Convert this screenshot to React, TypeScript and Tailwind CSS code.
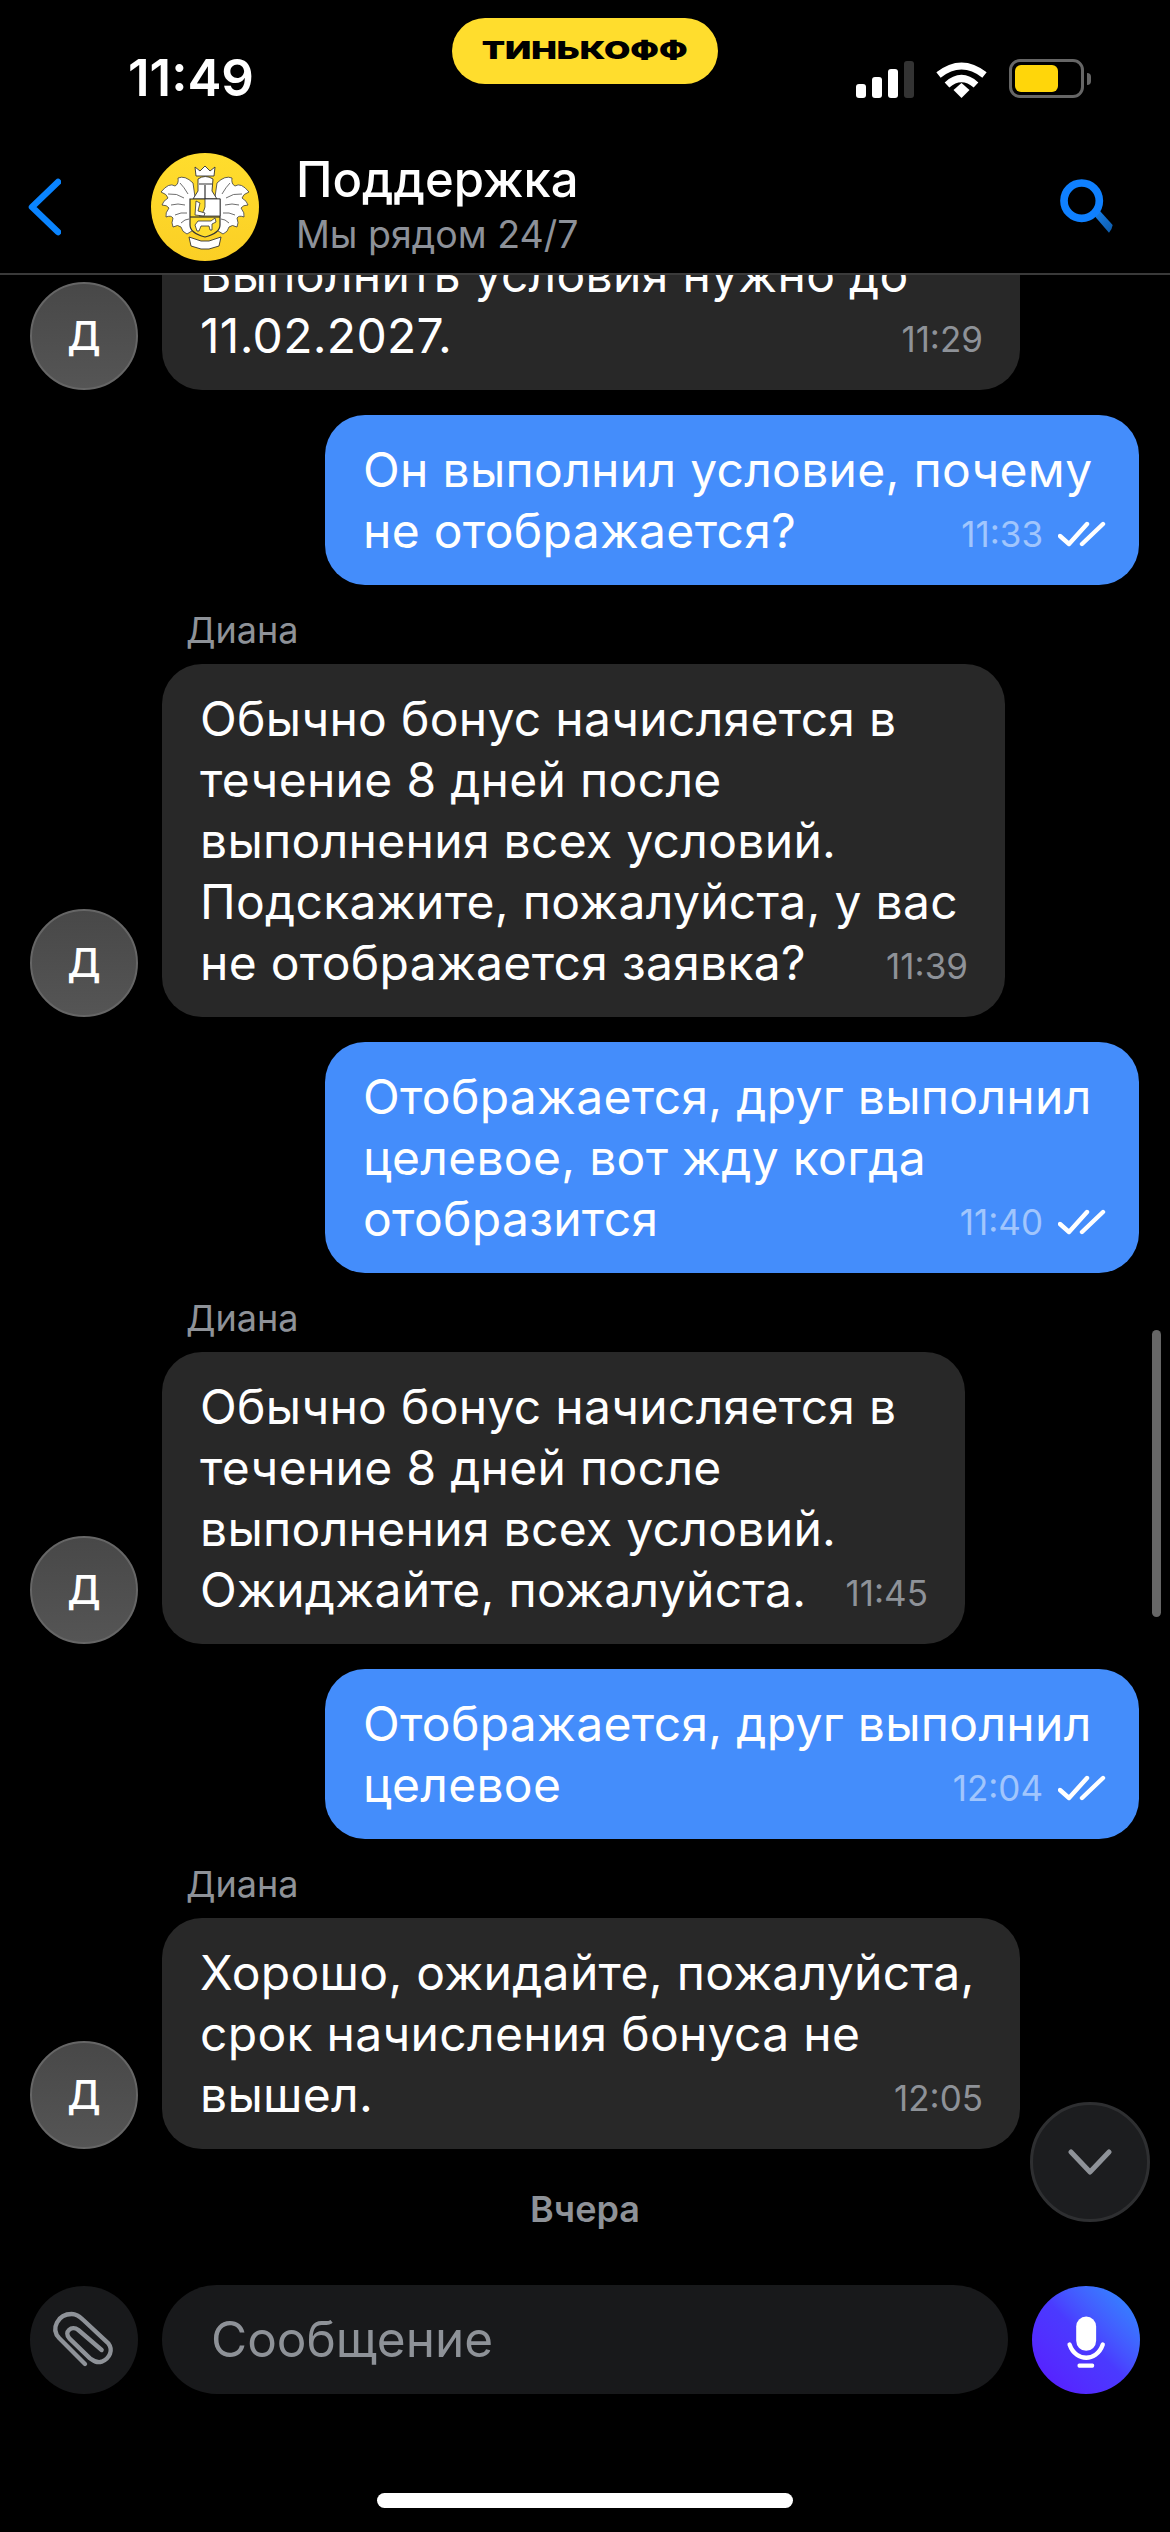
const sans = "font-['Inter','Liberation_Sans',sans-serif]";

type Msg = {
  out: boolean;
  name?: boolean;
  width: string;
  lines: string[];
  time: string;
};

const messages: Msg[] = [
  { out: false, width: "w-[858px]", lines: ["Выполнить условия нужно до", "11.02.2027."], time: "11:29" },
  { out: true, width: "w-[814px]", lines: ["Он выполнил условие, почему", "не отображается?"], time: "11:33" },
  {
    out: false,
    name: true,
    width: "w-[843px]",
    lines: ["Обычно бонус начисляется в", "течение 8 дней после", "выполнения всех условий.", "Подскажите, пожалуйста, у вас", "не отображается заявка?"],
    time: "11:39",
  },
  { out: true, width: "w-[814px]", lines: ["Отображается, друг выполнил", "целевое, вот жду когда", "отобразится"], time: "11:40" },
  {
    out: false,
    name: true,
    width: "w-[803px]",
    lines: ["Обычно бонус начисляется в", "течение 8 дней после", "выполнения всех условий.", "Ожиджайте, пожалуйста."],
    time: "11:45",
  },
  { out: true, width: "w-[814px]", lines: ["Отображается, друг выполнил", "целевое"], time: "12:04" },
  {
    out: false,
    name: true,
    width: "w-[858px]",
    lines: ["Хорошо, ожидайте, пожалуйста,", "срок начисления бонуса не", "вышел."],
    time: "12:05",
  },
];

function Crest() {
  return (
    <svg viewBox="0 0 108 108" className="w-[108px] h-[108px]">
      <defs>
        <linearGradient id="crestBg" x1="0" y1="0" x2="0" y2="1">
          <stop offset="0" stopColor="#ffdd2d" />
          <stop offset="1" stopColor="#fbcf25" />
        </linearGradient>
      </defs>
      <circle cx="54" cy="54" r="54" fill="url(#crestBg)" />
      <g fill="#fff" stroke="#3a3a3a" strokeWidth="0.8" strokeLinejoin="round">
        <path d="M42 30 Q34 22 27 25 Q28 31 24 33 Q18 29 10 39 Q16 41 17 45 Q12 48 11 52 Q16 52 18 55 Q14 60 15 64 Q20 62 22 65 Q20 70 22 74 Q27 71 30 74 Q31 79 36 81 L44 76 L44 44Z" />
        <path d="M66 30 Q74 22 81 25 Q80 31 84 33 Q90 29 98 39 Q92 41 91 45 Q96 48 97 52 Q92 52 90 55 Q94 60 93 64 Q88 62 86 65 Q88 70 86 74 Q81 71 78 74 Q77 79 72 81 L64 76 L64 44Z" />
      </g>
      <g fill="none" stroke="#4a4a4a" strokeWidth="0.8">
        <path d="M17 41 Q26 40 33 45 M20 52 Q27 50 34 52 M24 62 Q30 59 36 60 M30 70 Q34 66 38 66 M29 30 Q33 34 37 41" />
        <path d="M91 41 Q82 40 75 45 M88 52 Q81 50 74 52 M84 62 Q78 59 72 60 M78 70 Q74 66 70 66 M79 30 Q75 34 71 41" />
      </g>
      <path d="M45 23 L44 14 L49 18 L54 13 L59 18 L64 14 L63 23Z" fill="#fff" stroke="#333" strokeWidth="0.9" />
      <path d="M47 26 Q54 21 62 26 L61 38 L66 46 L42 46 L47 38Z" fill="#fff" stroke="#333" strokeWidth="0.9" />
      <path d="M48 31 H61 M54 32 V46" stroke="#333" strokeWidth="1.2" />
      <path d="M39 46 H69 V72 Q69 80 54 84 Q39 80 39 72Z" fill="#ffdd2d" stroke="#333" strokeWidth="1.2" />
      <path d="M39 64 H69" stroke="#333" strokeWidth="1.2" />
      <path d="M54 46 H69 V63 H48 Q54 58 54 54Z" fill="#fff" stroke="#333" strokeWidth="0.8" />
      <path d="M45 48 L49 50 L47 58 L54 60 L53 63 L44 62Z" fill="#fff" stroke="#333" strokeWidth="0.8" />
      <path d="M44 72 L47 68 L60 68 L64 65 L65 69 L61 71 L61 77 L59 77 L58 73 L50 73 L48 78 L46 78Z" fill="#fff" stroke="#333" strokeWidth="0.8" />
      <path d="M38 84 L50 88 H58 L70 84 L68 93 L58 96 H50 L40 93Z" fill="#fff" stroke="#333" strokeWidth="0.9" />
    </svg>
  );
}

function Checks() {
  return (
    <svg viewBox="0 0 48 26" className="w-[48px] h-[26px] ml-[15px]" fill="none" stroke="#fff" strokeWidth="4.4" strokeLinecap="round" strokeLinejoin="round">
      <path d="M2 15 L11 23 L29 3" />
      <path d="M24 23 L45 3" />
    </svg>
  );
}

function Avatar() {
  return (
    <div className="w-[108px] h-[108px] shrink-0 rounded-full bg-gradient-to-b from-[#484848] to-[#555555] border-[2px] border-[#666666] flex items-center justify-center text-white text-[40px] font-medium">
      Д
    </div>
  );
}

function Bubble({ m }: { m: Msg }) {
  const last = m.lines[m.lines.length - 1];
  return (
    <div className={`${m.width} rounded-[40px] px-[38px] py-[24px] text-[48px] tracking-[0.3px] leading-[61px] text-white ${m.out ? "bg-[#448dfb]" : "bg-[#282828]"}`}>
      {m.lines.slice(0, -1).map((l) => (
        <div key={l} className="whitespace-nowrap">{l}</div>
      ))}
      <div className="flex items-center justify-between whitespace-nowrap">
        <span>{last}</span>
        <span className={`flex items-center text-[35px] tracking-normal leading-[32px] mt-[6px] ${m.out ? "text-white/50 -mr-[5px]" : "text-[#8e9298] -mr-[1px]"}`}>
          {m.time}
          {m.out && <Checks />}
        </span>
      </div>
    </div>
  );
}

export default function App() {
  return (
    <div className={`relative w-[1170px] h-[2532px] bg-black flex flex-col overflow-hidden ${sans}`}>
      <div className="h-[140px] shrink-0 flex items-start">
        <div className="w-[452px] pl-[128px] pt-[52px] text-white text-[51px] leading-[52px] font-semibold">11:49</div>
        <div className="mt-[18px] w-[266px] h-[66px] rounded-full bg-[#ffdd2d] flex items-center justify-center text-black text-[25px] font-black">
          <span className="inline-block scale-x-[1.36]">ТИНЬКОФФ</span>
        </div>
        <div className="ml-[138px] mt-[59px] flex items-end">
          <div className="flex items-end gap-[6px] h-[37px]">
            <div className="w-[10px] h-[14px] rounded-[3px] bg-white" />
            <div className="w-[10px] h-[21px] rounded-[3px] bg-white" />
            <div className="w-[10px] h-[29px] rounded-[3px] bg-white" />
            <div className="w-[10px] h-[37px] rounded-[3px] bg-[#333333]" />
          </div>
          <svg viewBox="0 0 51 37" className="w-[51px] h-[37px] ml-[22px]" fill="none" stroke="#fff" strokeWidth="7">
            <path d="M2.5 14 Q25.5 -4 48.5 14" />
            <path d="M11 24 Q25.5 11 40 24" />
            <path d="M17.5 29 L25.5 22 L33.5 29 L25.5 37Z" fill="#fff" stroke="none" />
          </svg>
          <div className="ml-[22px] w-[75px] h-[39px] rounded-[11px] border-[3px] border-[#666666] p-[3px]">
            <div className="w-[43px] h-full rounded-[6px] bg-[#ffd60a]" />
          </div>
          <div className="w-[4px] h-[12px] ml-[3px] mb-[13px] rounded-r-full bg-[#666666]" />
        </div>
      </div>

      <div className="h-[135px] shrink-0 border-b-[2px] border-[#3a3a3a] flex items-start pt-[13px]">
        <svg viewBox="0 0 33 58" className="w-[33px] h-[58px] ml-[28px] mt-[25px]" fill="none" stroke="#0a84ff" strokeWidth="6.5" strokeLinecap="round" strokeLinejoin="round">
          <path d="M30 4 L4 29 L30 54" />
        </svg>
        <div className="ml-[90px]">
          <Crest />
        </div>
        <div className="ml-[37px] flex-1">
          <div className="text-white text-[49px] leading-[54px] font-medium">Поддержка</div>
          <div className="text-[#8d9199] text-[37.5px] leading-[44px] mt-[6px]">Мы рядом 24/7</div>
        </div>
        <svg viewBox="0 0 270 240" className="w-[90px] h-[80px] mr-[40px] mt-[12px]">
          <defs>
            <linearGradient id="handle" x1="0" y1="0" x2="1" y2="1">
              <stop offset="0" stopColor="#1a80ea" />
              <stop offset="1" stopColor="#0c5aa8" />
            </linearGradient>
          </defs>
          <path d="M163 152 L180 138 L218 180 Q216 194 207 203Z" fill="url(#handle)" />
          <circle cx="125" cy="107" r="53" fill="none" stroke="#0f80ff" strokeWidth="23" />
        </svg>
      </div>

      <div className="flex-1 min-h-0 overflow-hidden flex flex-col justify-end gap-[25px]">
        {messages.map((m) => (
          <div key={m.time} className="flex flex-col">
            {m.name && <div className="ml-[186px] mt-[-1px] mb-[13px] h-[42px] text-[36px] leading-[42px] text-[#8e9298]">Диана</div>}
            {m.out ? (
              <div className="flex justify-end pr-[31px]">
                <Bubble m={m} />
              </div>
            ) : (
              <div className="flex items-end pl-[30px] gap-[24px]">
                <Avatar />
                <Bubble m={m} />
              </div>
            )}
          </div>
        ))}
        <div className="text-center text-[#8e9298] text-[36px] leading-[44px] font-semibold mt-[13px] mb-[54px]">Вчера</div>
      </div>

      <div className="shrink-0 h-[109px] flex items-center pl-[30px]">
        <div className="w-[108px] h-[108px] rounded-full bg-[#18191b] flex items-center justify-center">
          <svg viewBox="0 0 324 300" className="w-[108px] h-[100px]" fill="none" stroke="#8e9298" strokeWidth="13" strokeLinecap="round" strokeLinejoin="round">
            <path d="M165 222 L88 145 C60 115 85 72 125 72 C140 72 150 80 160 90 L235 160 C250 180 240 205 215 215 C200 220 190 212 180 205 L118 145 C100 125 125 105 145 120 L215 180" />
          </svg>
        </div>
        <div className="ml-[24px] w-[846px] h-[109px] rounded-full bg-[#18191b] flex items-center pl-[49px] text-[49.5px] text-[#8e9298]">Сообщение</div>
        <div className="ml-[24px] w-[108px] h-[108px] rounded-full bg-gradient-to-tr from-[#5a14ff] via-[#4a3aff] to-[#2a90ff]">
          <svg viewBox="5 0 325 325" className="w-[108px] h-[108px]" fill="#fff">
            <rect x="138" y="92" width="60" height="103" rx="30" />
            <path d="M118 176 C128 205 150 216 168 216 C186 216 208 205 218 176" fill="none" stroke="#fff" strokeWidth="13" strokeLinecap="round" />
            <rect x="142" y="233" width="50" height="13" rx="5" />
          </svg>
        </div>
      </div>

      <div className="shrink-0 h-[138px] flex justify-center pt-[99px]">
        <div className="w-[416px] h-[15px] rounded-full bg-white" />
      </div>

      <div className="absolute left-[1152px] top-[1330px] w-[9px] h-[287px] rounded-full bg-[#666666]" />
      <div className="absolute left-[1030px] top-[2102px] w-[120px] h-[120px] rounded-full bg-[#1c1d1f] border-[3px] border-[#2e2f31] flex items-center justify-center">
        <svg viewBox="0 0 44 26" className="w-[44px] h-[26px]" fill="none" stroke="#8e9298" strokeWidth="5" strokeLinecap="round" strokeLinejoin="round">
          <path d="M3 3 L22 23 L41 3" />
        </svg>
      </div>
    </div>
  );
}
